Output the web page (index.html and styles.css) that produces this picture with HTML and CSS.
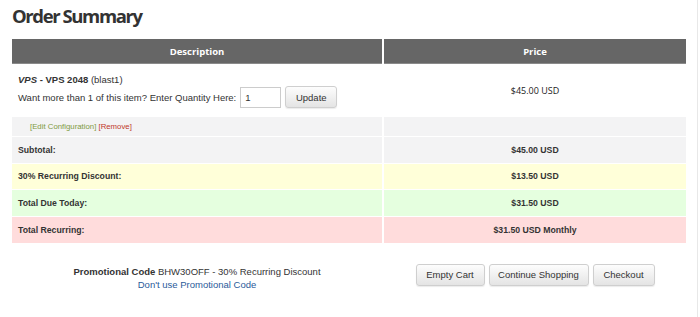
FILE: index.html
```html
<!DOCTYPE html>
<html lang="en">
<head>
    <meta charset="UTF-8">
    <title>Order Summary</title>
    <link rel="stylesheet" href="styles.css">
</head>
<body>
<div class="page">
    <h1 class="title">Order Summary</h1>

    <div class="cart">
        <div class="cell head">Description</div>
        <div class="cell head">Price</div>

        <div class="cell item">
            <div class="item-name"><b><i>VPS</i> - VPS 2048</b> (blast1)</div>
            <div class="qty">
                Want more than 1 of this item? Enter Quantity Here:
                <input class="qty-input" type="text" value="1">
                <button class="btn btn-update">Update</button>
            </div>
        </div>
        <div class="cell item price">$45.00 USD</div>

        <div class="cell tools"><a class="edit" href="#">[Edit Configuration]</a>&nbsp;<a class="remove" href="#">[Remove]</a></div>
        <div class="cell tools"></div>

        <div class="cell sum subtotal">Subtotal:</div>
        <div class="cell sum subtotal price">$45.00 USD</div>

        <div class="cell sum discount">30% Recurring Discount:</div>
        <div class="cell sum discount price">$13.50 USD</div>

        <div class="cell sum due">Total Due Today:</div>
        <div class="cell sum due price">$31.50 USD</div>

        <div class="cell sum recurring">Total Recurring:</div>
        <div class="cell sum recurring price">$31.50 USD Monthly</div>
    </div>

    <div class="footer">
        <div class="promo">
            <div><b>Promotional Code</b> BHW30OFF - 30% Recurring Discount</div>
            <a href="#">Don't use Promotional Code</a>
        </div>
        <div class="actions">
            <button class="btn btn-empty">Empty Cart</button>
            <button class="btn btn-continue">Continue Shopping</button>
            <button class="btn btn-checkout">Checkout</button>
        </div>
    </div>
</div>
</body>
</html>
```

FILE: styles.css
```css
* {
    box-sizing: border-box;
}

body {
    margin: 0;
    background: #fff;
    font-family: "Liberation Sans", Arial, sans-serif;
    font-size: 9.5px;
    color: #333;
}

.page {
    width: 698px;
    height: 317px;
    padding: 0 0 0 12px;
    border-right: 1px solid #e8e8e8;
}

.title {
    margin: 0;
    height: 39px;
    padding-top: 3px;
    font-family: "Open Sans", sans-serif;
    font-size: 18.5px;
    font-weight: bold;
    letter-spacing: -1.4px;
    color: #333;
}

.cart {
    display: grid;
    grid-template-columns: 370px 302px;
    column-gap: 2px;
    row-gap: 1px;
    width: 674px;
}

.cell {
    display: flex;
    align-items: center;
}

.head {
    height: 25px;
    justify-content: center;
    background: #666;
    border-bottom: 1px solid #8a8a8a;
    color: #fff;
    font-family: "Open Sans", sans-serif;
    font-weight: bold;
    font-size: 9.5px;
}

.item {
    height: 51px;
    padding: 0 6px;
    flex-direction: column;
    align-items: flex-start;
    justify-content: center;
}

.item-name {
    margin-top: 1px;
}

.qty {
    display: flex;
    align-items: center;
    gap: 4px;
    margin-top: 1px;
}

.qty-input {
    width: 41px;
    height: 21px;
    border: 1px solid #ccc;
    padding: 0 4px;
    font-family: "Liberation Sans", Arial, sans-serif;
    font-size: 9.5px;
    color: #333;
}

.price {
    justify-content: center;
    align-items: center;
    padding: 0;
    font-weight: bold;
}

.item.price {
    font-weight: normal;
    font-family: "Open Sans", sans-serif;
    font-size: 9px;
    color: #222;
}

.tools {
    height: 19px;
    padding-left: 18px;
    background: #f3f3f4;
    font-size: 7.8px;
}

.tools a {
    text-decoration: none;
}

.edit {
    color: #7f9a3f;
}

.remove {
    color: #c0392b;
}

.sum {
    height: 25.67px;
    padding-left: 6px;
    font-weight: bold;
    font-size: 8.7px;
}

.sum.price {
    padding: 0;
}

.subtotal {
    background: #f3f3f4;
}

.discount {
    background: #ffffd9;
}

.due {
    background: #e5ffdf;
}

.recurring {
    background: #ffdcdc;
}

.footer {
    display: grid;
    grid-template-columns: 370px 302px;
    column-gap: 2px;
    width: 674px;
    margin-top: 21px;
}

.promo {
    text-align: center;
    line-height: 13px;
    margin-top: 1px;
}

.promo a {
    color: #2a5a9a;
    text-decoration: none;
}

.actions {
    display: flex;
    justify-content: center;
    gap: 4px;
}

.btn {
    height: 22px;
    padding: 0;
    border: 1px solid #cfcfcf;
    border-radius: 3px;
    background: linear-gradient(#fdfdfd, #e4e4e4);
    box-shadow: 0 1px 1px rgba(0, 0, 0, 0.08);
    font-family: "Liberation Sans", Arial, sans-serif;
    font-size: 9.5px;
    color: #333;
}

.btn-update {
    width: 52px;
}

.btn-empty {
    width: 69px;
}

.btn-continue {
    width: 100px;
}

.btn-checkout {
    width: 62px;
}
```
